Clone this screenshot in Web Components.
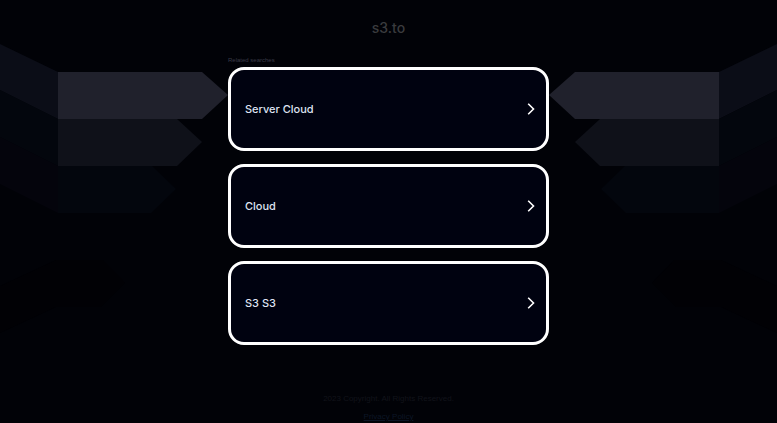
<!DOCTYPE html>
<html lang="en">
<head>
<meta charset="utf-8">
<meta name="viewport" content="width=device-width, initial-scale=1">
<title>s3.to</title>
<style>
  html { background: #010207; }
  body {
    margin: 0;
    font-family: "Liberation Sans", Arial, sans-serif;
  }
</style>
</head>
<body>
<parking-page>
  <span slot="title">s3.to</span>
  <related-searches label="Related searches">
    <search-card href="#server-cloud">Server Cloud</search-card>
    <search-card href="#cloud">Cloud</search-card>
    <search-card href="#s3-s3">S3 S3</search-card>
  </related-searches>
  <page-footer slot="footer"></page-footer>
</parking-page>

<script>
class ArrowBackdrop extends HTMLElement {
  constructor() {
    super();
    this.attachShadow({ mode: 'open' });
    this.shadowRoot.innerHTML = `
      <style>
        :host {
          display: block;
        }
        svg {
          display: block;
          width: 100%;
          height: 100%;
        }
      </style>
      <svg viewBox="0 0 777 423" preserveAspectRatio="xMidYMin slice" aria-hidden="true">
        <defs>
          <g id="ribbons">
            <path fill="#0b0d17" d="M0 44 58 72V119L0 90Z"/>
            <path fill="#03060d" d="M0 90 58 119V166L0 137Z"/>
            <path fill="#04040c" d="M0 137 58 166V213L0 184Z"/>
            <path fill="#20212c" d="M58 72H202L228 95 202 119H58Z"/>
            <path fill="#0f1119" d="M58 119H177L202 142 177 166H58Z"/>
            <path fill="#03060d" d="M58 166H152L176 189 151 213H58Z"/>
            <path fill="#010105" d="M0 286 56 260H103L125 283 101 307H56L0 333Z"/>
          </g>
        </defs>
        <use href="#ribbons"/>
        <use href="#ribbons" transform="translate(777 0) scale(-1 1)"/>
      </svg>
    `;
  }
}

class SearchCard extends HTMLElement {
  constructor() {
    super();
    this.attachShadow({ mode: 'open' });
    this.shadowRoot.innerHTML = `
      <style>
        :host {
          display: block;
        }
        a {
          display: flex;
          align-items: center;
          justify-content: space-between;
          box-sizing: border-box;
          min-height: 84px;
          padding: 0 11px 0 14px;
          border: 3px solid #fff;
          border-radius: 16px;
          background: #000210;
          color: #dfe3f2;
          font: 500 11px/16px Inter, "Liberation Sans", sans-serif;
          text-decoration: none;
        }
        a:hover {
          background: #0b0d1e;
        }
        svg {
          width: 8px;
          height: 12px;
          fill: none;
          stroke: #fff;
          stroke-width: 1.6;
        }
      </style>
      <a>
        <slot></slot>
        <svg viewBox="0 0 8 12" aria-hidden="true"><path d="M1.2 0.8 6.5 6 1.2 11.2"/></svg>
      </a>
    `;
  }

  connectedCallback() {
    this.shadowRoot.querySelector('a').href = this.getAttribute('href');
  }
}

class RelatedSearches extends HTMLElement {
  constructor() {
    super();
    this.attachShadow({ mode: 'open' });
    this.shadowRoot.innerHTML = `
      <style>
        :host {
          display: block;
        }
        h2 {
          margin: 0;
          color: #3b3b47;
          font-size: 6px;
          font-weight: normal;
          line-height: 14px;
        }
        .cards {
          display: grid;
          gap: 13px;
        }
      </style>
      <h2></h2>
      <div class="cards"><slot></slot></div>
    `;
  }

  connectedCallback() {
    this.shadowRoot.querySelector('h2').textContent = this.getAttribute('label');
  }
}

class PageFooter extends HTMLElement {
  constructor() {
    super();
    this.attachShadow({ mode: 'open' });
    this.shadowRoot.innerHTML = `
      <style>
        :host {
          display: flex;
          flex-direction: column;
          align-items: center;
          gap: 6px;
          color: #11131a;
          font-size: 8px;
          line-height: 12px;
        }
        a {
          color: #0c1626;
        }
      </style>
      <span>2023 Copyright. All Rights Reserved.</span>
      <a href="#privacy">Privacy Policy</a>
    `;
  }
}

class ParkingPage extends HTMLElement {
  constructor() {
    super();
    this.attachShadow({ mode: 'open' });
    this.shadowRoot.innerHTML = `
      <style>
        :host {
          display: block;
          position: relative;
          overflow: hidden;
        }
        arrow-backdrop {
          position: absolute;
          inset: 0;
        }
        .page {
          position: relative;
          display: flex;
          flex-direction: column;
          align-items: center;
          padding: 18px 16px 0;
        }
        h1 {
          margin: 0 0 15px;
          color: #3a3b3e;
          font: 500 14px/20px Inter, "Liberation Sans", sans-serif;
        }
        main {
          width: 100%;
          max-width: 321px;
        }
        footer {
          margin-top: 48px;
        }
      </style>
      <arrow-backdrop></arrow-backdrop>
      <div class="page">
        <h1><slot name="title"></slot></h1>
        <main><slot></slot></main>
        <footer><slot name="footer"></slot></footer>
      </div>
    `;
  }
}

customElements.define('arrow-backdrop', ArrowBackdrop);
customElements.define('search-card', SearchCard);
customElements.define('related-searches', RelatedSearches);
customElements.define('page-footer', PageFooter);
customElements.define('parking-page', ParkingPage);
</script>
</body>
</html>
